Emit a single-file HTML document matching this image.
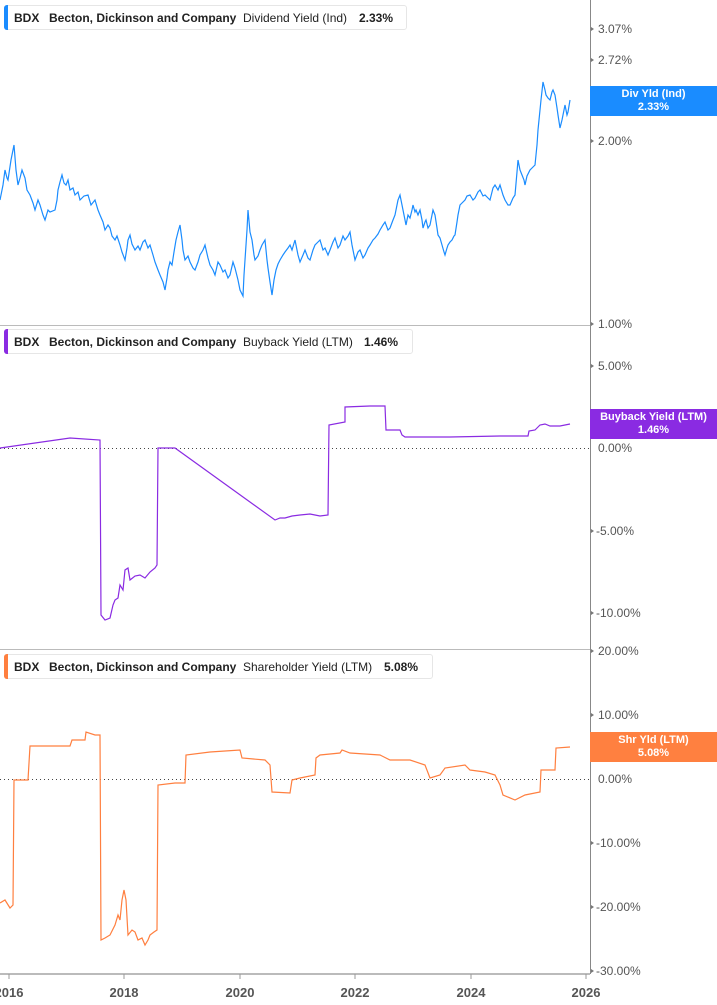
<!DOCTYPE html>
<html><head><meta charset="utf-8"><style>
html,body{margin:0;padding:0;background:#fff;width:717px;height:1005px;overflow:hidden;font-family:"Liberation Sans",sans-serif}
.leg{position:absolute;left:4px;height:25px;border:1px solid #e6e6e6;border-radius:3px;background:#fff;font-size:12px;line-height:25px;color:#222;white-space:nowrap;box-sizing:border-box}
.leg i{position:absolute;left:-1px;top:-1px;bottom:-1px;width:4px;border-radius:3px 0 0 3px}
.leg span{position:absolute;top:0}
.b{font-weight:bold}
.tag{position:absolute;left:590px;width:127px;height:30px;color:#fff;font-size:11px;font-weight:bold;text-align:center;line-height:13px;padding-top:2px;box-sizing:border-box}
</style></head><body>
<svg width="717" height="1005" style="position:absolute;left:0;top:0" font-family="Liberation Sans, sans-serif">
<line x1="590.5" y1="0" x2="590.5" y2="974" stroke="#888" stroke-width="1"/>
<line x1="0" y1="325.5" x2="590" y2="325.5" stroke="#bbb"/>
<line x1="0" y1="649.5" x2="590" y2="649.5" stroke="#bbb"/>
<line x1="0" y1="974" x2="590" y2="974" stroke="#bbb" stroke-width="2"/>
<line x1="0" y1="448.5" x2="590" y2="448.5" stroke="#444" stroke-dasharray="1,3"/>
<line x1="0" y1="779.5" x2="590" y2="779.5" stroke="#444" stroke-dasharray="1,3"/>
<g stroke="#999"><line x1="9" y1="974" x2="9" y2="979"/><line x1="124" y1="974" x2="124" y2="979"/><line x1="240" y1="974" x2="240" y2="979"/><line x1="355" y1="974" x2="355" y2="979"/><line x1="471" y1="974" x2="471" y2="979"/><line x1="586" y1="974" x2="586" y2="979"/></g>
<g fill="#777"><path d="M591 27l3 2-3 2z"/><path d="M591 58l3 2-3 2z"/><path d="M591 139l3 2-3 2z"/><path d="M591 322l3 2-3 2z"/><path d="M591 364l3 2-3 2z"/><path d="M591 529l3 2-3 2z"/><path d="M591 611l3 2-3 2z"/><path d="M591 649l3 2-3 2z"/><path d="M591 713l3 2-3 2z"/><path d="M591 841l3 2-3 2z"/><path d="M591 905l3 2-3 2z"/><path d="M591 969l3 2-3 2z"/></g>
<g font-size="13" font-weight="bold" fill="#555" text-anchor="middle">
<text x="9" y="997">2016</text><text x="124" y="997">2018</text><text x="240" y="997">2020</text><text x="355" y="997">2022</text><text x="471" y="997">2024</text><text x="586" y="997">2026</text></g>
<g font-size="12" fill="#555">
<text x="598" y="33">3.07%</text><text x="598" y="64">2.72%</text><text x="598" y="145">2.00%</text><text x="598" y="328">1.00%</text>
<text x="598" y="370">5.00%</text><text x="598" y="452">0.00%</text><text x="596" y="535">-5.00%</text><text x="596" y="617">-10.00%</text>
<text x="598" y="655">20.00%</text><text x="598" y="719">10.00%</text><text x="598" y="783">0.00%</text><text x="596" y="847">-10.00%</text><text x="596" y="911">-20.00%</text><text x="596" y="975">-30.00%</text></g>
<polyline fill="none" stroke="#1a8cff" stroke-width="1.2" points="0,200 3,185 5,170 7,178 8,180 11,160 14,145 16,170 18,185 20,178 22,170 25,178 27,190 30,195 33,203 35,210 38,200 40,205 43,215 45,220 48,210 50,212 55,210 57,200 58,190 60,182 62,175 64,183 66,185 68,180 70,190 73,188 75,195 78,192 80,200 84,196 88,195 91,205 95,200 98,210 100,215 103,222 105,230 108,225 110,228 112,236 115,240 117,236 120,245 122,252 125,260 127,248 128,240 130,235 132,244 135,250 138,246 140,250 143,242 145,240 148,248 150,245 153,255 155,262 158,270 160,275 163,282 165,290 167,278 168,270 170,262 172,265 174,252 176,240 178,232 180,225 182,240 183,250 185,260 188,256 190,262 193,268 195,270 198,262 200,255 203,250 205,245 208,258 210,265 213,270 215,275 218,262 220,265 223,272 225,270 228,278 230,275 233,262 235,268 238,280 240,290 243,296 244,275 245,260 247,230 248,210 250,232 252,240 254,255 255,260 258,256 260,250 262,245 265,240 267,260 268,268 270,282 272,295 274,280 276,270 278,264 280,260 283,255 285,252 288,248 290,245 292,250 295,240 298,255 300,262 303,255 305,250 308,258 310,260 313,250 315,245 318,242 320,240 323,250 325,248 328,255 330,250 333,242 335,238 338,248 340,245 343,236 345,240 348,236 350,232 352,245 355,260 358,252 360,250 363,258 365,255 368,248 370,245 373,240 375,238 378,234 380,230 383,225 385,222 388,230 390,228 393,220 395,215 397,205 398,200 400,195 402,205 403,210 405,220 406,225 408,215 410,218 412,210 413,205 415,212 416,210 418,215 420,210 422,220 423,228 425,222 426,220 428,228 430,225 432,215 433,210 435,215 437,228 438,235 440,238 442,245 444,252 445,255 447,248 448,245 450,242 452,240 454,236 455,235 457,222 458,215 460,205 462,203 465,200 467,196 470,195 473,200 475,198 478,192 480,190 483,196 485,195 488,198 490,200 493,188 495,185 498,190 500,185 503,195 505,200 508,205 510,205 513,198 515,195 517,172 518,160 520,170 522,175 524,180 525,185 527,176 530,170 532,168 535,165 536,155 537,145 538,130 540,110 541,100 543,82 545,90 546,95 548,98 550,100 552,92 553,90 555,95 557,108 558,115 560,128 562,120 563,115 565,105 567,115 568,112 570,100"/>
<polyline fill="none" stroke="#8a2be2" stroke-width="1.2" points="0,448 70,438 100,440 101,615 105,620 110,618 113,605 115,600 118,598 120,585 123,590 125,570 128,568 130,580 135,576 140,575 145,578 150,572 155,568 157,565 158,448 175,448 275,520 280,518 285,518 292,516 300,515 310,514 320,516 328,515 329,425 345,422 345,407 370,406 385,406 386,430 400,430 402,435 405,437 450,437 500,436 528,436 529,431 535,430 540,425 545,424 550,426 560,426 570,424"/>
<polyline fill="none" stroke="#ff7f3f" stroke-width="1.2" points="0,903 5,900 10,908 13,905 14,780 28,780 30,746 70,746 72,740 85,740 86,732 95,735 100,735 101,940 105,938 110,935 115,925 118,915 120,920 122,900 124,890 126,900 128,935 132,930 135,932 138,940 142,938 145,945 148,940 150,935 154,932 157,930 158,785 175,783 185,783 186,755 210,752 240,750 242,758 265,760 270,765 272,792 290,793 292,780 300,778 315,775 316,758 320,755 340,753 342,750 350,753 380,755 384,757 390,760 410,760 425,765 430,778 440,775 445,768 465,765 470,770 485,772 495,775 500,785 503,795 515,800 525,795 540,792 541,770 555,770 556,748 570,747"/>
</svg>
<div class="leg" style="top:5px;width:403px"><i style="background:#1a8cff"></i><span class="b" style="left:9px">BDX</span><span class="b" style="left:44px">Becton, Dickinson and Company</span><span style="left:238px">Dividend Yield (Ind)</span><span class="b" style="left:354px">2.33%</span></div>
<div class="leg" style="top:329px;width:409px"><i style="background:#8a2be2"></i><span class="b" style="left:9px">BDX</span><span class="b" style="left:44px">Becton, Dickinson and Company</span><span style="left:238px">Buyback Yield (LTM)</span><span class="b" style="left:359px">1.46%</span></div>
<div class="leg" style="top:654px;width:429px"><i style="background:#ff7f3f"></i><span class="b" style="left:9px">BDX</span><span class="b" style="left:44px">Becton, Dickinson and Company</span><span style="left:238px">Shareholder Yield (LTM)</span><span class="b" style="left:379px">5.08%</span></div>
<div class="tag" style="top:86px;background:#1a8cff">Div Yld (Ind)<br>2.33%</div>
<div class="tag" style="top:409px;background:#8a2be2">Buyback Yield (LTM)<br>1.46%</div>
<div class="tag" style="top:732px;background:#ff8040">Shr Yld (LTM)<br>5.08%</div>
</body></html>
